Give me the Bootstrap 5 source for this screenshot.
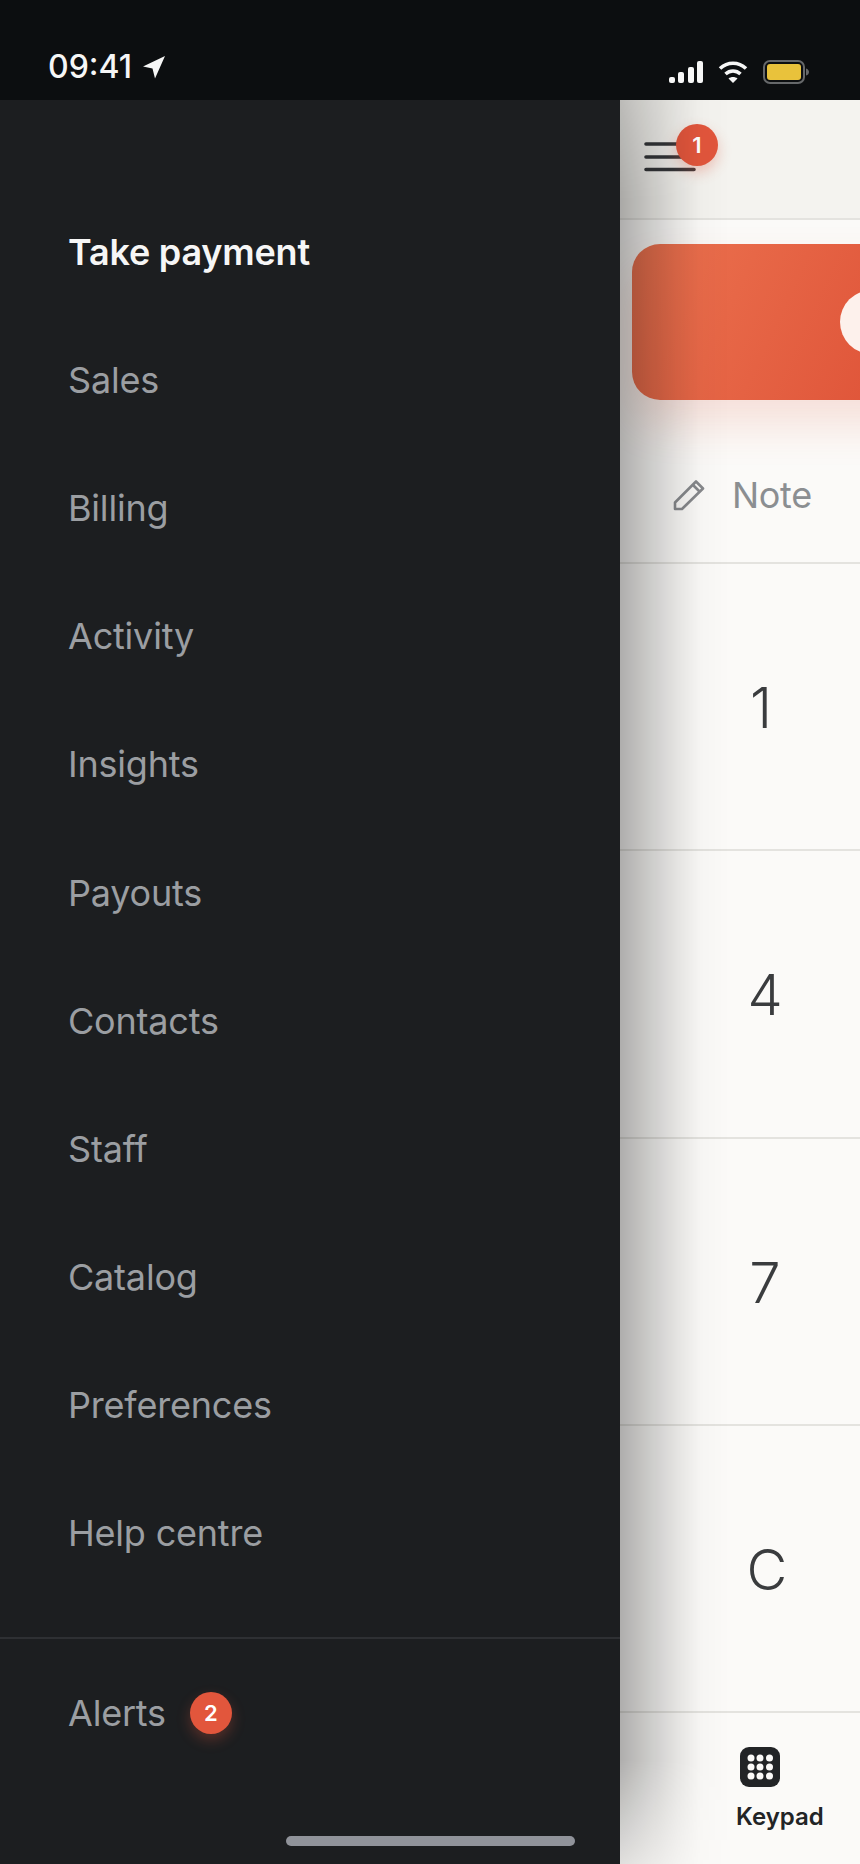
<!DOCTYPE html>
<html lang="en">
<head>
    <meta charset="UTF-8">
    <meta name="viewport" content="width=device-width, initial-scale=1.0">
    <title>Take payment</title>
    <link href="https://cdn.jsdelivr.net/npm/bootstrap@5.3.3/dist/css/bootstrap.min.css" rel="stylesheet">
    <script src="https://cdn.jsdelivr.net/npm/bootstrap@5.3.3/dist/js/bootstrap.bundle.min.js"></script>
    <style>
        body {
            width: 860px;
            height: 1864px;
            overflow: hidden;
            font-family: Inter, "Liberation Sans", sans-serif;
            background-color: #fbfaf8;
        }
        .status-bar {
            height: 100px;
            background-color: #0c0e10;
            color: #f6f6f6;
            padding: 0 50px 0 48px;
        }
        .status-time {
            font-size: 32px;
            font-weight: 500;
            line-height: 1.2;
            margin-top: 48px;
            gap: 10px;
        }
        .status-time svg {
            margin-top: 7px;
        }
        .status-icons {
            margin-top: 60px;
            gap: 15px;
        }
        .app-body {
            height: 1764px;
        }
        .drawer {
            width: 620px;
            flex: 0 0 620px;
            background-color: #1c1e20;
            position: relative;
        }
        .drawer-nav {
            padding: 88px 0 40px;
            border-bottom: 2px solid #2e3033;
        }
        .drawer-link {
            height: 128.1px;
            padding: 0 0 0 68px;
            display: flex;
            align-items: center;
            font-size: 36px;
            letter-spacing: -.2px;
            color: #9b9ea2;
        }
        .drawer-link.active {
            color: #f6f6f6;
            font-weight: 600;
        }
        .drawer-alerts {
            height: 148px;
        }
        .count-dot {
            width: 42px;
            height: 42px;
            border-radius: 50%;
            background-color: #e2563c;
            color: #fff;
            font-size: 22px;
            font-weight: 600;
            box-shadow: 0 6px 14px rgba(226, 86, 60, .3);
        }
        .home-bar {
            position: absolute;
            left: 286px;
            bottom: 18px;
            width: 289px;
            height: 10px;
            border-radius: 5px;
            background-color: #90939a;
        }
        .side-pane {
            min-width: 0;
            overflow: hidden;
            position: relative;
        }
        .side-pane::after {
            content: "";
            position: absolute;
            top: 0;
            bottom: 0;
            left: 0;
            width: 120px;
            pointer-events: none;
            background: linear-gradient(to right, rgba(0, 0, 0, .3), rgba(0, 0, 0, .2) 22%, rgba(0, 0, 0, .09) 47%, rgba(0, 0, 0, .02) 67%, rgba(0, 0, 0, 0) 92%);
            -webkit-mask-image: linear-gradient(to bottom, rgba(0, 0, 0, .75), #000 100px, #000 1660px, rgba(0, 0, 0, .35));
            mask-image: linear-gradient(to bottom, rgba(0, 0, 0, .75), #000 100px, #000 1660px, rgba(0, 0, 0, .35));
        }
        .pane-header {
            height: 120px;
            background-color: #f4f3ef;
            border-bottom: 2px solid #e4e3df;
            position: relative;
        }
        .pane-header .count-dot {
            position: absolute;
            left: 56px;
            top: 24px;
        }
        .menu-lines {
            position: absolute;
            left: 24px;
            top: 42px;
        }
        .amount-card {
            width: 400px;
            height: 156px;
            margin: 24px 0 0 12px;
            border-radius: 28px;
            background: linear-gradient(115deg, #ec7350 0%, #e0563a 65%);
            box-shadow: 0 24px 44px rgba(224, 86, 58, .16);
            padding-left: 208px;
        }
        .amount-knob {
            width: 64px;
            height: 64px;
            border-radius: 50%;
            background-color: #fdf1ec;
        }
        .note-row {
            height: 164px;
            padding: 28px 0 0 53px;
            gap: 27px;
            border-bottom: 2px solid #e4e3df;
            color: #8b8e91;
            font-size: 36px;
            letter-spacing: -.3px;
        }
        .key-row {
            height: 287.25px;
            width: 290px;
            padding-top: 3px;
            border-bottom: 2px solid #e4e3df;
            font-size: 56px;
            font-weight: 300;
            color: #3a3c3e;
        }
        .key-rows {
            width: 240px;
        }
        .tab-item {
            padding: 34px 0 0 116px;
            color: #222426;
            font-size: 24px;
            font-weight: 600;
            line-height: 1.2;
        }
        .tab-item svg {
            margin: 0 0 16px 4px;
        }
    </style>
</head>
<body>
<div class="status-bar d-flex justify-content-between">
    <div class="status-time d-flex align-items-start">
        <span>09:41</span>
        <svg width="24" height="24" viewBox="0 0 24 24"><path fill="#f6f6f6" d="M23 1 1 11.500l9.500 2 2.500 10z"/></svg>
    </div>
    <div class="status-icons d-flex align-items-start">
        <svg width="34" height="24" viewBox="0 0 34 24" fill="#f6f6f6">
            <rect x="0" y="17" width="6" height="6" rx="2"/>
            <rect x="9" y="12" width="6" height="11" rx="2"/>
            <rect x="19" y="7" width="6" height="16" rx="2"/>
            <rect x="28" y="1" width="6" height="22" rx="2"/>
        </svg>
        <svg width="30" height="24" viewBox="0 0 30 24" fill="none" stroke="#f6f6f6" stroke-width="3.600">
            <path d="M2 8.500c7.500-7 18.500-7 26 0"/>
            <path d="M7.500 14c4.500-4 10.500-4 15 0"/>
            <path d="M15 23l-4.500-4.500c2.500-2 6.500-2 9 0z" fill="#f6f6f6" stroke="none"/>
        </svg>
        <svg width="47" height="24" viewBox="0 0 47 24">
            <rect x="1" y="1" width="40" height="22" rx="6" fill="none" stroke="#66686a" stroke-width="2"/>
            <rect x="4" y="4" width="34" height="16" rx="3" fill="#e9c23b"/>
            <path d="M43 8.500c2 .5 3 2 3 3.500s-1 3-3 3.500z" fill="#66686a"/>
        </svg>
    </div>
</div>
<div class="app-body d-flex">
    <aside class="drawer">
        <nav class="nav flex-column drawer-nav">
            <a class="nav-link drawer-link active" href="#">Take payment</a>
            <a class="nav-link drawer-link" href="#">Sales</a>
            <a class="nav-link drawer-link" href="#">Billing</a>
            <a class="nav-link drawer-link" href="#">Activity</a>
            <a class="nav-link drawer-link" href="#">Insights</a>
            <a class="nav-link drawer-link" href="#">Payouts</a>
            <a class="nav-link drawer-link" href="#">Contacts</a>
            <a class="nav-link drawer-link" href="#">Staff</a>
            <a class="nav-link drawer-link" href="#">Catalog</a>
            <a class="nav-link drawer-link" href="#">Preferences</a>
            <a class="nav-link drawer-link" href="#">Help centre</a>
        </nav>
        <div class="drawer-alerts d-flex align-items-center">
            <a class="nav-link drawer-link" href="#">Alerts</a>
            <span class="count-dot d-flex align-items-center justify-content-center ms-4">2</span>
        </div>
        <div class="home-bar"></div>
    </aside>
    <main class="side-pane flex-grow-1">
        <div class="pane-header">
            <svg class="menu-lines" width="52" height="30" viewBox="0 0 52 30" stroke="#35373a" stroke-width="3.600" stroke-linecap="round">
                <path d="M2 2h48M2 15h48M2 27.500h48"/>
            </svg>
            <span class="count-dot d-flex align-items-center justify-content-center">1</span>
        </div>
        <div class="amount-card d-flex align-items-center">
            <div class="amount-knob"></div>
        </div>
        <div class="note-row d-flex align-items-center">
            <svg width="32" height="32" viewBox="0 0 32 32" fill="none" stroke="#87898c" stroke-width="2.600" stroke-linejoin="round">
                <path d="M2 23.500 23 2.500l7 7L9 30H2z"/>
                <path d="M20 6l6.500 6.500"/>
            </svg>
            <span>Note</span>
        </div>
        <div class="key-rows">
            <div class="key-row d-flex align-items-center justify-content-center pe-2">1</div>
            <div class="key-row d-flex align-items-center justify-content-center">4</div>
            <div class="key-row d-flex align-items-center justify-content-center">7</div>
            <div class="key-row d-flex align-items-center justify-content-center ps-1">C</div>
        </div>
        <div class="tab-item d-flex flex-column align-items-start">
            <svg width="40" height="40" viewBox="0 0 40 40">
                <rect width="40" height="40" rx="9" fill="#222426"/>
                <g fill="#fbfaf8">
                    <circle cx="11" cy="11" r="3.500"/><circle cx="20" cy="11" r="3.500"/><circle cx="29.500" cy="11" r="3.500"/>
                    <circle cx="11" cy="20" r="3.500"/><circle cx="20" cy="20" r="3.500"/><circle cx="29.500" cy="20" r="3.500"/>
                    <circle cx="11" cy="29" r="3.500"/><circle cx="20" cy="29" r="3.500"/><circle cx="29.500" cy="29" r="3.500"/>
                </g>
            </svg>
            <span>Keypad</span>
        </div>
    </main>
</div>
</body>
</html>
